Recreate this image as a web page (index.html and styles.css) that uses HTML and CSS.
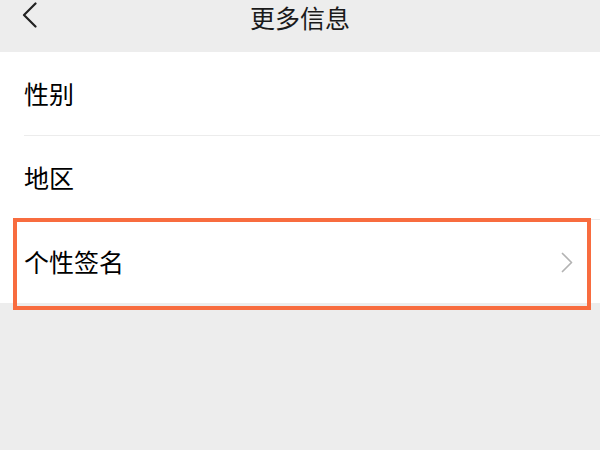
FILE: index.html
```html
<!DOCTYPE html>
<html lang="zh-CN">
<head>
<meta charset="utf-8">
<title>更多信息</title>
<link rel="stylesheet" href="styles.css">
</head>
<body>
<header class="nav">
  <div class="nav-left">
    <svg class="back" width="16" height="26" viewBox="0 0 16 26"><polyline points="13.5,1.5 2,13 13.5,24.5" fill="none" stroke="#222" stroke-width="2.2" stroke-linecap="round" stroke-linejoin="round"/></svg>
  </div>
  <div class="nav-title">更多信息</div>
  <div class="nav-right"></div>
</header>
<main class="list">
  <div class="row"><div class="row-inner"><span class="label">性别</span></div></div>
  <div class="row"><div class="row-inner"><span class="label">地区</span></div></div>
  <div class="row last">
    <div class="row-inner">
      <span class="label">个性签名</span>
      <svg class="arrow" width="12" height="21" viewBox="0 0 12 21"><polyline points="1.5,1.5 10.5,10.5 1.5,19.5" fill="none" stroke="#b3b3b3" stroke-width="1.7" stroke-linecap="round" stroke-linejoin="round"/></svg>
    </div>
  </div>
</main>
<div class="highlight"></div>
</body>
</html>
```
FILE: styles.css
```css
html, body {
  margin: 0;
  padding: 0;
  background: #ededed;
  font-family: "Noto Sans CJK SC", "Noto Sans", sans-serif;
}
body {
  position: relative;
  min-height: 450px;
}
.nav {
  height: 52px;
  display: grid;
  grid-template-columns: 1fr auto 1fr;
  align-items: start;
  background: #ededed;
}
.nav-left {
  padding-left: 22px;
  padding-top: 2px;
}
.back {
  display: block;
}
.nav-title {
  font-size: 25px;
  line-height: 34px;
  color: #1a1a1a;
}
.list {
  background: #fff;
}
.row {
  padding-left: 24px;
}
.row-inner {
  height: 83px;
  border-bottom: 1px solid #ececec;
  display: flex;
  align-items: center;
  justify-content: space-between;
  padding-right: 27px;
}
.row.last .row-inner {
  border-bottom: none;
}
.label {
  font-size: 25px;
  color: #000;
  line-height: 30px;
  margin-top: -2px;
}
.arrow {
  display: block;
  margin-top: 2px;
}
.highlight {
  position: absolute;
  left: 13px;
  top: 218px;
  width: 570px;
  height: 84px;
  border: 4px solid #f86c3f;
  z-index: 5;
  pointer-events: none;
}
```
